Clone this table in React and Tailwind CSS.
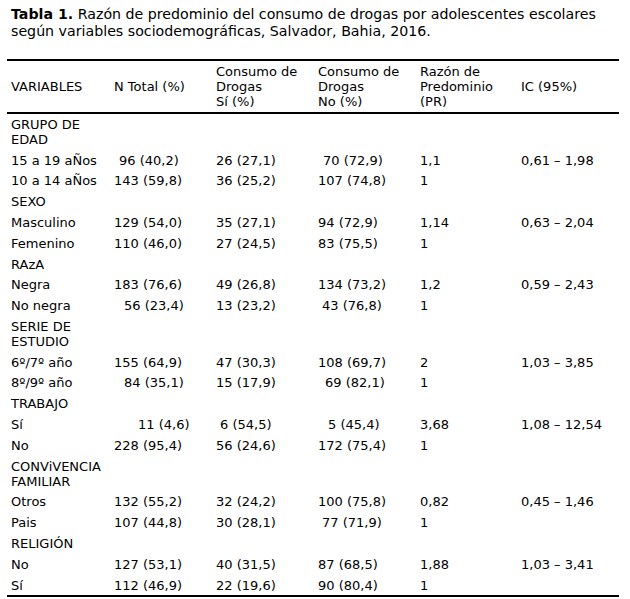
import React from "react";

const grid = "grid grid-cols-[104px_102px_102px_102px_101px_1fr]";

const pad = {
  0: "pl-[3px]",
  4: "pl-[7px]",
  5: "pl-[8px]",
  7: "pl-[10px]",
  10: "pl-[13px]",
  24: "pl-[27px]",
};

const rows = [
  { group: ["GRUPO DE", "EDAD"] },
  ["15 a 19 aÑos", ["96 (40,2)", 5], ["26 (27,1)", 0], ["70 (72,9)", 5], "1,1", "0,61 – 1,98"],
  ["10 a 14 aÑos", ["143 (59,8)", 0], ["36 (25,2)", 0], ["107 (74,8)", 0], "1", ""],
  { group: ["SEXO"] },
  ["Masculino", ["129 (54,0)", 0], ["35 (27,1)", 0], ["94 (72,9)", 0], "1,14", "0,63 – 2,04"],
  ["Femenino", ["110 (46,0)", 0], ["27 (24,5)", 0], ["83 (75,5)", 0], "1", ""],
  { group: ["RAzA"] },
  ["Negra", ["183 (76,6)", 0], ["49 (26,8)", 0], ["134 (73,2)", 0], "1,2", "0,59 – 2,43"],
  ["No negra", ["56 (23,4)", 10], ["13 (23,2)", 0], ["43 (76,8)", 4], "1", ""],
  { group: ["SERIE DE", "ESTUDIO"] },
  ["6º/7º año", ["155 (64,9)", 0], ["47 (30,3)", 0], ["108 (69,7)", 0], "2", "1,03 – 3,85"],
  ["8º/9º año", ["84 (35,1)", 10], ["15 (17,9)", 0], ["69 (82,1)", 7], "1", ""],
  { group: ["TRABAJO"] },
  ["Sí", ["11 (4,6)", 24], ["6 (54,5)", 4], ["5 (45,4)", 10], "3,68", "1,08 – 12,54"],
  ["No", ["228 (95,4)", 0], ["56 (24,6)", 0], ["172 (75,4)", 0], "1", ""],
  { group: ["CONViVENCIA", "FAMILIAR"] },
  ["Otros", ["132 (55,2)", 0], ["32 (24,2)", 0], ["100 (75,8)", 0], "0,82", "0,45 – 1,46"],
  ["Pais", ["107 (44,8)", 0], ["30 (28,1)", 0], ["77 (71,9)", 4], "1", ""],
  { group: ["RELIGIÓN"] },
  ["No", ["127 (53,1)", 0], ["40 (31,5)", 0], ["87 (68,5)", 0], "1,88", "1,03 – 3,41"],
  ["Sí", ["112 (46,9)", 0], ["22 (19,6)", 0], ["90 (80,4)", 0], "1", ""],
];

function Row({ row }) {
  if (!Array.isArray(row)) {
    return (
      <div className={`${grid} py-[2.9px]`}>
        <div className="pl-[4px]">
          {row.group.map((l, i) => (
            <div key={i}>{l}</div>
          ))}
        </div>
      </div>
    );
  }
  const [label, a, b, c, pr, ic] = row;
  return (
    <div className={`${grid} py-[2.9px]`}>
      <div className="pl-[4px]">{label}</div>
      <div className={pad[a[1]]}>{a[0]}</div>
      <div className={pad[b[1]]}>{b[0]}</div>
      <div className={pad[c[1]]}>{c[0]}</div>
      <div className="pl-[3px]">{pr}</div>
      <div className="pl-[3px]">{ic}</div>
    </div>
  );
}

export default function App() {
  return (
    <div className="w-[630px] h-[599px] bg-white text-black font-['DejaVu_Sans',sans-serif]">
      <p className="pl-[11px] pt-[6px] text-[14.2px] leading-[17px]">
        <b>Tabla 1.</b> Razón de predominio del consumo de drogas por adolescentes escolares
        <br />
        según variables sociodemográficas, Salvador, Bahia, 2016.
      </p>

      <div className="ml-[7px] mt-[19px] w-[612px] text-[13px] leading-[15px]">
        <div className={`${grid} items-center border-y-2 border-black py-[3px]`}>
          <div className="pl-[4px]">VARIABLES</div>
          <div className="pl-[3px]">N Total (%)</div>
          <div className="pl-[3px]">
            Consumo de
            <br />
            Drogas
            <br />
            Sí (%)
          </div>
          <div className="pl-[3px]">
            Consumo de
            <br />
            Drogas
            <br />
            No (%)
          </div>
          <div className="pl-[3px]">
            Razón de
            <br />
            Predominio
            <br />
            (PR)
          </div>
          <div className="pl-[3px]">IC (95%)</div>
        </div>

        <div className="border-b-2 border-black">
          {rows.map((r, i) => (
            <Row key={i} row={r} />
          ))}
        </div>
      </div>
    </div>
  );
}
